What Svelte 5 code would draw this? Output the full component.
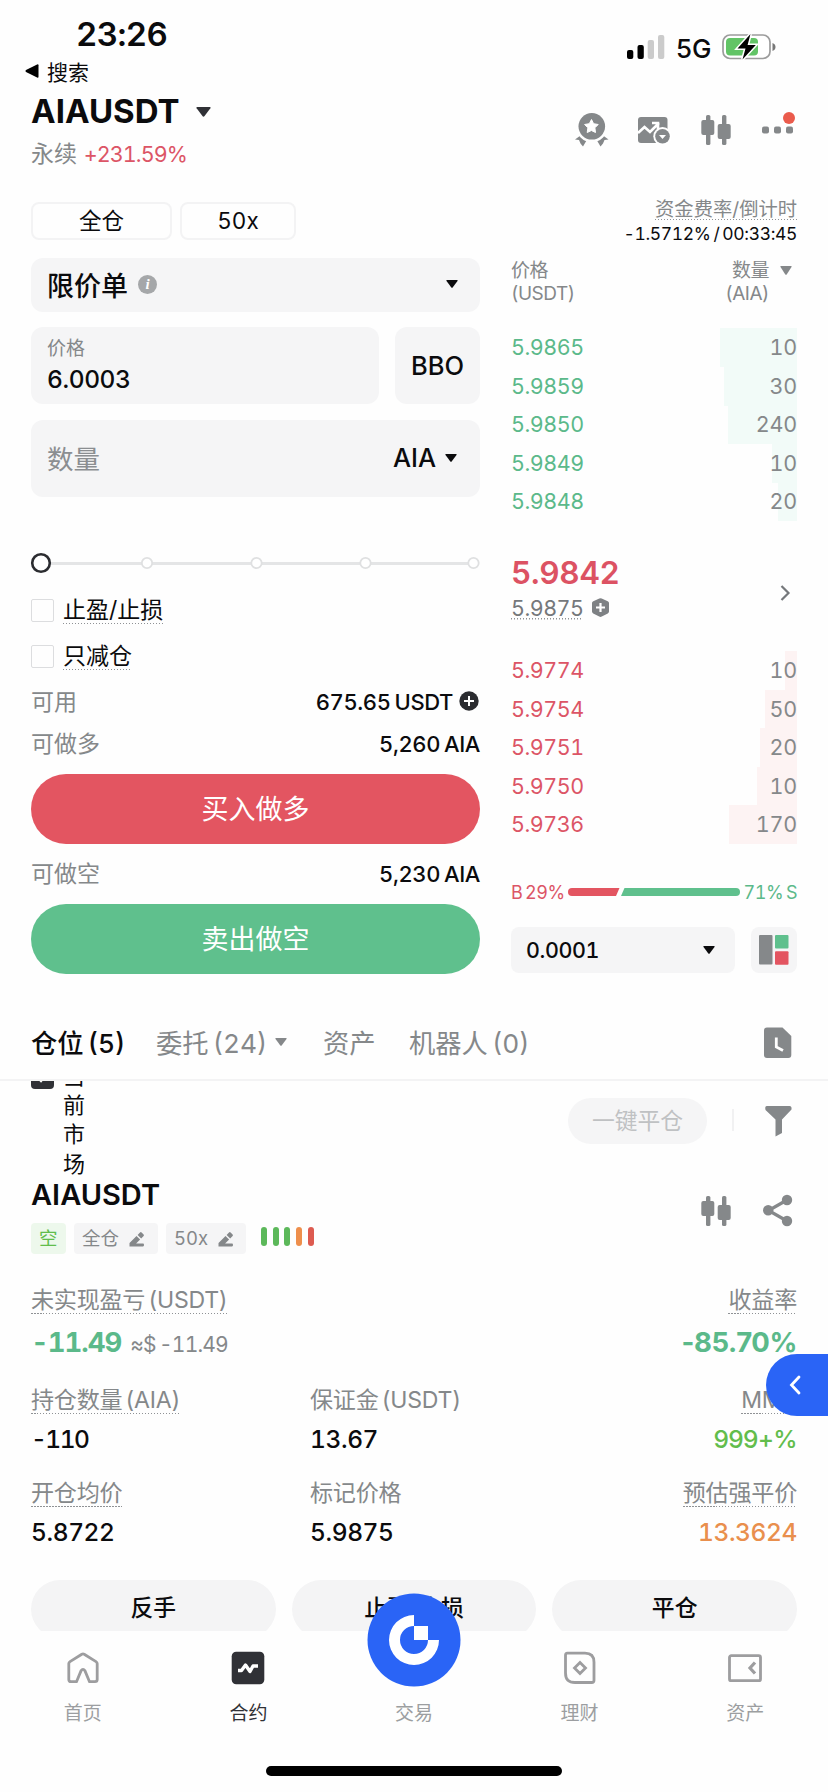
<script lang="ts">
    type Level = { price: string; amount: string; depth: number };

    const asks: Level[] = [
        {price: "5.9865", amount: "10", depth: 77},
        {price: "5.9859", amount: "30", depth: 73},
        {price: "5.9850", amount: "240", depth: 69},
        {price: "5.9849", amount: "10", depth: 25},
        {price: "5.9848", amount: "20", depth: 19}
    ];

    const bids: Level[] = [
        {price: "5.9774", amount: "10", depth: 12},
        {price: "5.9754", amount: "50", depth: 32},
        {price: "5.9751", amount: "20", depth: 37},
        {price: "5.9750", amount: "10", depth: 40},
        {price: "5.9736", amount: "170", depth: 68}
    ];

    const stops = [116, 225.5, 334.5, 442.5];
    const risk = ["low", "low", "low", "mid", "high"];
</script>

{#snippet caret(w: number, h: number)}
    <svg class="caret" width={w} height={h} viewBox="0 0 14 9" preserveAspectRatio="none">
        <path d="M1.2 0h11.6q1.4 0 .6 1.1L8 8.2q-1 1.2-2 0L.6 1.1Q-.2 0 1.2 0z" fill="currentColor"/>
    </svg>
{/snippet}

{#snippet candles()}
    <svg width="30" height="34" viewBox="0 0 30 34" fill="#85888a">
        <rect x="5" y="3" width="4.4" height="30" rx="1.6"/>
        <rect x="0.3" y="8" width="13" height="15" rx="2"/>
        <rect x="21" y="3" width="4.4" height="30" rx="1.6"/>
        <rect x="16.7" y="12" width="13" height="15" rx="2"/>
    </svg>
{/snippet}

{#snippet pencil()}
    <svg width="16" height="16" viewBox="0 0 16 16" fill="#85888a">
        <path d="M0.5 15.5V12l7-7 3.6 3.6-4 4H14q1 0 1 1.4t-1 1.5zM8.6 3.9 11 1.5q.8-.8 1.6 0l2 2q.8.8 0 1.6l-2.4 2.4z"/>
    </svg>
{/snippet}

{#snippet levels(list: Level[], side: string)}
    <div class="levels {side}">
        {#each list as row}
            <div class="level">
                <span class="price">{row.price}</span>
                <span class="depth" style="width:{row.depth}px"></span>
                <span class="amount">{row.amount}</span>
            </div>
        {/each}
    </div>
{/snippet}

<div class="phone">
    <main>
        <div class="status">
            <div>
                <div class="time">23:26</div>
                <div class="back">
                    <svg width="14" height="14" viewBox="0 0 14 14"><path d="M13.5 1.2v11.6q0 1.4-1.4.8L1 8q-1.3-1 0-2L12.1.4q1.4-.6 1.4.8z"/></svg>
                    搜索
                </div>
            </div>
            <div class="signals">
                <svg width="38" height="24" viewBox="0 0 38 24">
                    <rect x="0" y="15" width="6.3" height="9" rx="2"/>
                    <rect x="10.5" y="10" width="6.3" height="14" rx="2"/>
                    <rect x="20.7" y="5" width="6.3" height="19" rx="2" fill="#cbcbcb"/>
                    <rect x="31" y="0" width="6.3" height="24" rx="2" fill="#cbcbcb"/>
                </svg>
                <span>5G</span>
                <svg width="54" height="28" viewBox="0 0 54 28">
                    <rect x="1" y="2" width="47" height="23.5" rx="7" fill="#fff" stroke="#9c9c9c" stroke-width="1.7"/>
                    <rect x="4" y="5" width="32" height="17.5" rx="4" fill="#62c466"/>
                    <path d="M50.5 10v8q3-1.2 3-4t-3-4z" fill="#777"/>
                    <path d="M28.5 1 15.5 15.4h8L20.5 26.5 33.8 12h-8.2z" stroke="#fff" stroke-width="3" paint-order="stroke"/>
                </svg>
            </div>
        </div>

        <header>
            <div>
                <div class="pair">AIAUSDT <span class="pair-caret">{@render caret(15, 10)}</span></div>
                <div class="change">永续 <b>+231.59%</b></div>
            </div>
            <div class="tools">
                <svg width="32" height="34" viewBox="0 0 32 34" fill="#85888a">
                    <path d="M0 27.500 5.500 23.500 11.500 28.500 8 34.500 5.500 31.500 4 28zM33.500 27.500 28 23.500 22 28.500 25.500 34.500 28 31.500 29.500 28z"/>
                    <circle cx="16.800" cy="14.300" r="14.600" fill="none" stroke="#fefefe" stroke-width="2.600"/>
                    <circle cx="16.800" cy="14.300" r="13.300"/>
                    <path d="m16.500 7.500 2.100 4.200 4.600.8-3.300 3.300.6 4.700-4.100-2-4.200 2 .7-4.700-3.300-3.300 4.700-.8z" fill="#fff" stroke="#fff" stroke-linejoin="round"/>
                </svg>
                <svg width="32" height="34" viewBox="0 0 32 34" fill="#85888a">
                    <path d="M3 5h23.500q3 0 3 3v12L19 31H3q-3 0-3-3V8q0-3 3-3z"/>
                    <path d="m0 21 6.500-6 5.500 5L21 11M14 11h6v6" fill="none" stroke="#fff" stroke-width="2.600"/>
                    <circle cx="24.500" cy="24.300" r="9.200" fill="#fff"/>
                    <circle cx="24.500" cy="24.300" r="7.300"/>
                    <path d="M21 23h7l-3.500 4z" fill="#fff"/>
                </svg>
                {@render candles()}
                <svg width="35" height="34" viewBox="0 0 35 34" fill="#85888a">
                    <rect x="0" y="14.500" width="7" height="7" rx="2"/>
                    <rect x="12" y="14.500" width="7" height="7" rx="2"/>
                    <rect x="24" y="14.500" width="7" height="7" rx="2"/>
                    <circle cx="27" cy="6" r="6" fill="#ea5b4c"/>
                </svg>
            </div>
        </header>

        <div class="trade">
            <section class="form">
                <div class="modes">
                    <span class="margin">全仓</span>
                    <span class="lever">50x</span>
                </div>
                <div class="field type">
                    <span>限价单</span>
                    <i class="info">i</i>
                    <span class="end">{@render caret(12, 8)}</span>
                </div>
                <div class="prices">
                    <div class="field limit">
                        <small>价格</small>
                        <strong>6.0003</strong>
                    </div>
                    <div class="field bbo">BBO</div>
                </div>
                <div class="field qty">
                    <span class="hint">数量</span>
                    <span class="unit">AIA {@render caret(12, 8)}</span>
                </div>
                <svg class="slider" width="449" height="24" viewBox="0 0 449 24">
                    <path d="M10 12.5H442" stroke="#e4e5e6" stroke-width="3"/>
                    {#each stops as x}
                        <circle cx={x} cy="12" r="5.2" fill="#fff" stroke="#dfe0e1" stroke-width="1.8"/>
                    {/each}
                    <circle cx="10" cy="12" r="8.8" fill="#fff" stroke="#2b2c30" stroke-width="2.6"/>
                </svg>
                <div class="check"><span class="box"></span><span class="dotted">止盈/止损</span></div>
                <div class="check second"><span class="box"></span><span class="dotted">只减仓</span></div>
                <div class="info-row first">
                    <span>可用</span>
                    <b>675.65 USDT
                        <svg width="20" height="20" viewBox="0 0 20 20"><circle cx="10" cy="10" r="9.7" fill="#2b2c30"/><path d="M10 5v10M5 10h10" stroke="#fff" stroke-width="2"/></svg>
                    </b>
                </div>
                <div class="info-row"><span>可做多</span><b>5,260 AIA</b></div>
                <button class="buy">买入做多</button>
                <div class="info-row short"><span>可做空</span><b>5,230 AIA</b></div>
                <button class="sell">卖出做空</button>
            </section>

            <section class="book">
                <div class="funding"><span class="dotted">资金费率/倒计时</span></div>
                <div class="countdown">-1.5712% / 00:33:45</div>
                <div class="book-head">
                    <div>价格<br>(USDT)</div>
                    <div class="amount-head">
                        <div>数量<br>(AIA)</div>
                        {@render caret(12, 9)}
                    </div>
                </div>
                {@render levels(asks, "ask")}
                <div class="mid">
                    <div>
                        <div class="last">5.9842</div>
                        <div class="mark">
                            <span class="dotted">5.9875</span>
                            <svg width="17" height="19" viewBox="0 0 17 19"><path d="M7.3.6q1.2-.7 2.4 0l6 2.6q1.3.6 1.3 1.8v8.6q0 1.2-1.2 1.9l-6 3.1q-1.3.7-2.6 0l-6-3.1Q0 14.8 0 13.6V5q0-1.2 1.3-1.8z" fill="#7e8184"/><path d="M8.5 5v9M4 9.500h9" stroke="#fff" stroke-width="2.2"/></svg>
                        </div>
                    </div>
                    <svg class="more" width="10" height="16" viewBox="0 0 10 16"><path d="m1.5 1 7 7-7 7" fill="none" stroke="#75787b" stroke-width="2.2"/></svg>
                </div>
                {@render levels(bids, "bid")}
                <div class="ratio">
                    <span class="b">B 29%</span>
                    <svg width="172" height="8" viewBox="0 0 172 8">
                        <path d="M4 0h47.5L48 8H4a4 4 0 0 1 0-8z" fill="#e35561"/>
                        <path d="M56.5 0H168a4 4 0 0 1 0 8H53z" fill="#5fc08d"/>
                    </svg>
                    <span class="s">71% S</span>
                </div>
                <div class="step">
                    <div class="field tick">0.0001 {@render caret(12, 8)}</div>
                    <div class="field view">
                        <svg width="30" height="30" viewBox="0 0 30 30">
                            <rect width="13.5" height="29.5" rx="1" fill="#85888a"/>
                            <rect x="16" width="13.5" height="13.5" rx="1" fill="#5fc08d"/>
                            <rect x="16" y="16.2" width="13.5" height="13.5" rx="1" fill="#e35561"/>
                        </svg>
                    </div>
                </div>
            </section>
        </div>

        <nav class="tabs">
            <span class="tab active">仓位 (5)</span>
            <span class="tab orders">委托 (24) {@render caret(12, 8)}</span>
            <span class="tab assets">资产</span>
            <span class="tab bots">机器人 (0)</span>
            <svg width="28" height="32" viewBox="0 0 28 32"><path d="M3 .5h15.500L27.300 9v19q0 3-3 3H3q-3 0-3-3v-24.500q0-3 3-3z" fill="#85888a"/><path d="M12.300 10.500v9.500l6.700 3.500" fill="none" stroke="#fff" stroke-width="2.800"/></svg>
        </nav>

        <div class="filters">
            <span class="box on"><svg width="23" height="23" viewBox="0 0 23 23"><path d="m5 9.500 5 5 8-9" fill="none" stroke="#fff" stroke-width="3"/></svg></span>
            <span class="market">当前市场</span>
            <span class="close-all">一键平仓</span>
            <span class="sep"></span>
            <svg width="27" height="31" viewBox="0 0 27 31"><path d="M2 0h22.500Q27 0 26.500 3.500L17 13.500V27l-6.500 3.500v-17L.5 4Q-.5 0 2 0z" fill="#85888a"/></svg>
        </div>

        <section class="position">
            <div class="head">
                <div>
                    <h2>AIAUSDT</h2>
                    <div class="tags">
                        <span class="tag side">空</span>
                        <span class="tag mode">全仓 {@render pencil()}</span>
                        <span class="tag times">50x {@render pencil()}</span>
                        <span class="risk">
                            {#each risk as level}<i class={level}></i>{/each}
                        </span>
                    </div>
                </div>
                <div class="actions">
                    {@render candles()}
                    <svg width="30" height="34" viewBox="0 0 30 34"><path d="M24 7 5.500 17.500 24 28" fill="none" stroke="#85888a" stroke-width="3.200"/><circle cx="24" cy="7" r="5.200" fill="#85888a"/><circle cx="5.200" cy="17.300" r="5.200" fill="#85888a"/><circle cx="24" cy="28" r="5.200" fill="#85888a"/></svg>
                </div>
            </div>

            <div class="pnl">
                <div>
                    <span class="label dotted">未实现盈亏 (USDT)</span>
                    <div class="big">-11.49 <small>≈$ -11.49</small></div>
                </div>
                <div class="right">
                    <span class="label dotted">收益率</span>
                    <div class="big rate">-85.70%</div>
                </div>
            </div>

            <div class="stats">
                <div><span class="label dotted">持仓数量 (AIA)</span><p class="size">-110</p></div>
                <div><span class="label">保证金 (USDT)</span><p>13.67</p></div>
                <div class="right"><span class="label dotted">MMR</span><p class="safe">999+%</p></div>
                <div><span class="label dotted">开仓均价</span><p>5.8722</p></div>
                <div><span class="label">标记价格</span><p>5.9875</p></div>
                <div class="right"><span class="label dotted">预估强平价</span><p class="liq">13.3624</p></div>
            </div>

            <div class="ops">
                <button>反手</button>
                <button>止盈/止损</button>
                <button>平仓</button>
            </div>
        </section>
    </main>

    <footer>
        <div class="bar">
            <div class="item">
                <svg width="34" height="34" viewBox="0 0 34 34" fill="none" stroke="#9d9d9f" stroke-width="2.8" stroke-linejoin="round"><path d="M15.800 3.300q1.200-.7 2.400 0L30 10.600q1.200.8 1.200 2V28.500q0 2.200-2.200 2.200h-5.500l-4.500-10.800q-2-3-4 0L10.500 30.700H5q-2.200 0-2.200-2.200V12.600q0-1.200 1.200-2z"/></svg>
                首页
            </div>
            <div class="item active">
                <svg width="34" height="34" viewBox="0 0 34 34"><rect x=".7" y=".7" width="32.600" height="32.600" rx="4.500" fill="#303136"/><path d="M7 19.500h3.500l4-5.500 4.500 6.500 3-5.500H27" fill="none" stroke="#fff" stroke-width="3.400" stroke-linejoin="round"/></svg>
                合约
            </div>
            <div class="item trade-item">
                <svg width="94" height="94" viewBox="0 0 94 94"><circle cx="47" cy="47" r="46.500" fill="#2a64f6"/><path d="M47 22v11a14 14 0 1 0 14 14h11A25 25 0 1 1 47 22z" fill="#fff"/><rect x="47" y="33" width="14" height="14" fill="#fff"/></svg>
                交易
            </div>
            <div class="item">
                <svg width="34" height="34" viewBox="0 0 34 34" fill="none" stroke="#9d9d9f" stroke-width="2.800"><path d="M4.300 2.200H22q9 0 9 9v18q0 2.300-2.300 2.300H12q-9.500 0-9.500-9.500V4.200q0-2 1.800-2z"/><path d="m17 11.500 5.500 5.500-5.500 5.500-5.500-5.500z"/></svg>
                理财
            </div>
            <div class="item">
                <svg width="34" height="34" viewBox="0 0 34 34" fill="none" stroke="#9d9d9f" stroke-width="2.800"><rect x="1.500" y="4.700" width="31" height="25" rx="1.800"/><path d="m27 11.500-5 5.500 5 5.500" stroke-width="3.200"/></svg>
                资产
            </div>
        </div>
        <div class="home"></div>
    </footer>

    <button class="drawer" aria-label="open">
        <svg width="12" height="20" viewBox="0 0 12 20"><path d="M10 2 2.500 10l7.500 8" fill="none" stroke="#fff" stroke-width="2.800" stroke-linecap="round"/></svg>
    </button>
</div>

<style>
    :global(body) {
        background: #fff;
    }

    .phone {
        position: relative;
        width: 828px;
        height: 1792px;
        overflow: hidden;
        background: #fefefe;
        color: #0b0b0d;
        font-family: Inter, "Noto Sans CJK SC", sans-serif;
        font-feature-settings: "tnum";
        white-space: nowrap;
        word-spacing: -1.5px;
    }

    main {
        height: 1631px;
        overflow: hidden;
    }

    svg {
        display: block;
        flex: none;
        overflow: visible;
    }

    button {
        border: 0;
        padding: 0;
        font-family: inherit;
    }

    b {
        font-weight: 500;
    }

    .dotted {
        padding-bottom: 2px;
        background: repeating-linear-gradient(90deg, #8f9295 0 1.5px, transparent 1.5px 3px) left bottom / 100% 1.5px no-repeat;
    }

    .status {
        display: flex;
        justify-content: space-between;
        height: 92px;
    }

    .time {
        margin: 16px 0 0 76px;
        font-size: 33px;
        font-weight: 600;
        line-height: 36px;
        letter-spacing: -0.6px;
    }

    .back {
        display: flex;
        align-items: center;
        gap: 8px;
        margin-left: 25px;
        height: 38px;
        font-size: 21px;
    }

    .signals {
        display: flex;
        align-items: center;
        height: 28px;
        padding: 33px 52px 0 0;
        font-size: 26px;
        font-weight: 500;
    }

    .signals span {
        margin: 3px 11px 0;
        letter-spacing: -0.5px;
    }

    header {
        display: flex;
        justify-content: space-between;
        height: 110px;
        padding: 0 31px;
    }

    .pair {
        display: flex;
        align-items: center;
        gap: 17px;
        font-size: 33px;
        font-weight: 700;
        line-height: 39px;
    }

    .pair-caret {
        color: #303136;
    }

    .change {
        font-size: 23px;
        line-height: 46px;
        color: #85888a;
    }

    .change b {
        margin-left: 2px;
        font-size: 21.5px;
        font-weight: 400;
        letter-spacing: -0.9px;
        color: #dc5566;
    }

    .tools {
        display: flex;
        gap: 31px;
        padding-top: 20px;
    }

    .trade {
        display: grid;
        grid-template-columns: 449px 286px;
        gap: 31px;
        padding: 0 31px;
        height: 772px;
    }

    .modes {
        display: flex;
        gap: 8px;
        font-size: 22.5px;
        line-height: 34px;
        text-align: center;
    }

    .modes span {
        border: 2px solid #f3f3f4;
        border-radius: 8px;
    }

    .margin {
        width: 137px;
    }

    .lever {
        width: 112px;
    }

    .field {
        display: flex;
        align-items: center;
        box-sizing: border-box;
        border-radius: 12px;
        background: #f5f5f6;
    }

    .type {
        height: 54px;
        margin-top: 18px;
        padding: 0 22px 2px 16px;
        font-size: 27px;
        font-weight: 500;
    }

    .info {
        width: 19px;
        height: 19px;
        margin-left: 10px;
        border-radius: 50%;
        background: #a5a7a9;
        color: #fff;
        font: italic bold 15px/19px "Liberation Serif", serif;
        text-align: center;
    }

    .end {
        margin-left: auto;
    }

    .prices {
        display: flex;
        gap: 16px;
        margin-top: 15px;
        height: 77px;
    }

    .limit {
        flex: 1;
        flex-direction: column;
        align-items: flex-start;
        padding: 7px 16px 0;
    }

    .limit small {
        font-size: 19px;
        line-height: 30px;
        color: #85888a;
    }

    .limit strong {
        font-size: 24.5px;
        font-weight: 500;
        line-height: 31px;
        letter-spacing: -0.4px;
    }

    .bbo {
        width: 85px;
        justify-content: center;
        font-size: 25.5px;
        font-weight: 500;
    }

    .qty {
        justify-content: space-between;
        height: 77px;
        margin-top: 16px;
        padding: 0 23px 2px 16px;
        font-size: 26.5px;
    }

    .hint {
        color: #8b8e91;
    }

    .unit {
        display: flex;
        align-items: center;
        gap: 9px;
        font-size: 25.5px;
        font-weight: 500;
    }

    .slider {
        margin-top: 54px;
    }

    .check {
        display: flex;
        align-items: center;
        gap: 9px;
        height: 34px;
        margin-top: 19px;
        font-size: 23px;
        line-height: 24px;
    }

    .check.second {
        margin-top: 12px;
    }

    .box {
        box-sizing: border-box;
        width: 23px;
        height: 23px;
        border: 1.5px solid #dcdddf;
        border-radius: 2px;
    }

    .check .box {
        margin-top: -2px;
    }

    .info-row {
        display: flex;
        justify-content: space-between;
        margin-top: 2px;
        font-size: 23px;
        line-height: 40px;
        color: #85888a;
    }

    .info-row.first {
        margin-top: 8px;
    }

    .info-row.short {
        margin-top: 10px;
    }

    .info-row b {
        display: flex;
        align-items: center;
        gap: 6px;
        font-size: 22px;
        letter-spacing: -0.4px;
        color: #0b0b0d;
    }

    .info-row svg {
        margin: -2px 1px 0 0;
    }

    .buy,
    .sell {
        display: block;
        width: 449px;
        height: 70px;
        margin-top: 10px;
        padding-bottom: 3px;
        border-radius: 35px;
        background: #e35561;
        color: #fff;
        font-size: 27px;
    }

    .sell {
        background: #5fc08d;
    }

    .funding {
        display: flex;
        justify-content: flex-end;
        margin-top: -3px;
        font-size: 19.3px;
        line-height: 20px;
        color: #85888a;
    }

    .funding .dotted {
        padding-bottom: 1px;
    }

    .countdown {
        margin-top: 4px;
        font-size: 17.5px;
        line-height: 20px;
        letter-spacing: -0.35px;
        text-align: right;
    }

    .book-head {
        display: flex;
        justify-content: space-between;
        margin-top: 15px;
        font-size: 19px;
        line-height: 23px;
        letter-spacing: -0.5px;
        color: #85888a;
    }

    .amount-head {
        display: flex;
        gap: 11px;
        padding-right: 5px;
        text-align: right;
    }

    .amount-head :global(svg) {
        margin-top: 7px;
    }

    .levels {
        margin-top: 23px;
    }

    .level {
        display: grid;
        grid-template-columns: 1fr 1fr;
        height: 38.6px;
        font-size: 21.5px;
        line-height: 39px;
        letter-spacing: -0.45px;
    }

    .level > * {
        grid-row: 1;
    }

    .price {
        grid-column: 1;
    }

    .depth {
        grid-column: 2;
        justify-self: end;
    }

    .amount {
        grid-column: 2;
        text-align: right;
        letter-spacing: -0.2px;
        color: #85888a;
    }

    .ask .price {
        color: #5bb98a;
    }

    .ask .depth {
        background: #f2fbf8;
    }

    .bid {
        margin-top: 0;
    }

    .bid .price {
        color: #dc5566;
    }

    .bid .depth {
        background: #fdf3f3;
    }

    .mid {
        display: flex;
        justify-content: space-between;
        height: 97px;
        padding-top: 33px;
    }

    .last {
        font-size: 31.5px;
        font-weight: 600;
        line-height: 38px;
        letter-spacing: -0.3px;
        color: #dc5263;
    }

    .mark {
        display: flex;
        gap: 9px;
        margin-top: 6px;
        font-size: 21.5px;
        line-height: 20px;
        letter-spacing: -0.5px;
        color: #75787b;
    }

    .more {
        margin: 31px 7px 0 0;
    }

    .ratio {
        display: flex;
        align-items: center;
        justify-content: space-between;
        margin-top: 39px;
        font-size: 18px;
        line-height: 20px;
    }

    .ratio svg {
        margin-top: -2px;
    }

    .ratio span {
        letter-spacing: -0.5px;
    }

    .b {
        color: #dc5566;
    }

    .s {
        color: #5bb98a;
    }

    .step {
        display: flex;
        justify-content: space-between;
        margin-top: 24px;
    }

    .tick {
        justify-content: space-between;
        width: 224px;
        height: 46px;
        padding: 1px 20px 0 15px;
        border-radius: 8px;
        font-size: 21.5px;
        font-weight: 500;
        letter-spacing: -0.4px;
    }

    .view {
        justify-content: center;
        width: 46px;
        height: 46px;
        border-radius: 8px;
    }

    .tabs {
        display: flex;
        align-items: center;
        height: 72px;
        margin-top: 33px;
        padding: 0 36px 0 31px;
        border-bottom: 2px solid #f3f3f4;
        font-size: 26.3px;
        word-spacing: -3px;
        color: #85888a;
    }

    .tab {
        display: flex;
        align-items: center;
        gap: 8px;
        margin-top: -3px;
    }

    .tabs > svg {
        margin-left: auto;
    }

    .tabs .active {
        width: 125px;
        font-weight: 500;
        color: #0b0b0d;
    }

    .orders {
        width: 167px;
    }

    .assets {
        width: 86px;
    }

    .filters {
        display: flex;
        height: 98px;
        padding: 0 36px 0 31px;
        overflow: hidden;
    }

    .box.on {
        margin-top: -15px;
        border: 0;
        border-radius: 4px;
        background: #303136;
    }

    .market {
        width: 22px;
        margin: -19px auto 0 9px;
        font-size: 22px;
        line-height: 29.2px;
        white-space: normal;
    }

    .close-all {
        width: 139px;
        height: 46px;
        margin-top: 17px;
        border-radius: 23px;
        background: #f5f5f6;
        color: #bfc1c3;
        font-size: 22.8px;
        line-height: 45px;
        text-align: center;
    }

    .sep {
        width: 2px;
        height: 22px;
        margin: 28px 31px 0 25px;
        background: #f1f1f2;
    }

    .filters > svg {
        margin-top: 25px;
    }

    .position {
        padding: 0 31px;
    }

    .head {
        display: flex;
        justify-content: space-between;
        height: 75px;
    }

    h2 {
        margin: 0;
        font-size: 29px;
        font-weight: 600;
        line-height: 32px;
    }

    .tags {
        display: flex;
        gap: 8px;
        margin-top: 12px;
        font-size: 18.5px;
        line-height: 31px;
        color: #85888a;
    }

    .tag {
        display: flex;
        align-items: center;
        gap: 10px;
        box-sizing: border-box;
        height: 31px;
        padding-left: 8px;
        border-radius: 4px;
        background: #f5f5f6;
    }

    .tag.side {
        width: 35px;
        background: #edf8ec;
        color: #62bd4c;
    }

    .mode {
        width: 84px;
    }

    .times {
        width: 80px;
    }

    .risk {
        display: flex;
        gap: 5.7px;
        margin: 4px 0 0 7px;
    }

    .risk i {
        width: 6px;
        height: 19px;
        border-radius: 3px;
        background: #5cb85a;
    }

    .risk .mid {
        padding: 0;
        background: #ee8f4c;
    }

    .risk .high {
        background: #dd5b50;
    }

    .actions {
        display: flex;
        gap: 32px;
        padding: 14px 4px 0 0;
    }

    .pnl {
        display: flex;
        justify-content: space-between;
        margin-top: 34px;
    }

    .label {
        display: inline-block;
        padding-bottom: 2px;
        font-size: 23.1px;
        line-height: 24px;
        letter-spacing: -0.25px;
        word-spacing: -3px;
        color: #85888a;
    }

    .right {
        text-align: right;
    }

    .big {
        margin-top: 12px;
        font-size: 27.5px;
        font-weight: 700;
        line-height: 32px;
        letter-spacing: -1px;
        color: #5bb98a;
    }

    .big.rate {
        font-feature-settings: normal;
        letter-spacing: -0.4px;
    }

    .big small {
        margin-left: 4px;
        font-size: 21px;
        font-weight: 400;
        letter-spacing: -0.8px;
        color: #85888a;
    }

    .stats {
        display: grid;
        grid-template-columns: 279px 1fr auto;
        row-gap: 25px;
        margin-top: 27px;
    }

    .stats > div {
        height: 68px;
    }

    .stats p {
        margin: 9px 0 0;
        font-size: 24.5px;
        font-weight: 500;
        line-height: 32px;
        letter-spacing: -0.4px;
    }

    .stats .size {
        letter-spacing: -1.5px;
    }

    .stats .safe {
        font-feature-settings: normal;
        letter-spacing: -0.7px;
        color: #62bd4c;
    }

    .stats .liq {
        color: #e98f4d;
    }

    .ops {
        display: grid;
        grid-template-columns: repeat(3, 1fr);
        gap: 16px;
        margin-top: 31px;
    }

    .ops button {
        height: 58px;
        padding-bottom: 5px;
        border-radius: 29px;
        background: #f4f4f5;
        color: #0b0b0d;
        font-size: 22.8px;
        font-weight: 500;
    }

    footer {
        height: 161px;
        background: #fefefe;
    }

    .bar {
        display: flex;
        height: 135px;
    }

    .item {
        flex: 1;
        display: flex;
        flex-direction: column;
        align-items: center;
        gap: 17px;
        padding-top: 20px;
        font-size: 19px;
        line-height: 24px;
        color: #9c9ea1;
    }

    .item.active {
        color: #303136;
    }

    .trade-item svg {
        position: relative;
        margin: -58px 0 -2px;
    }

    .home {
        width: 296px;
        height: 10px;
        margin: 0 auto;
        border-radius: 5px;
        background: #000;
    }

    .drawer {
        position: absolute;
        top: 1354px;
        right: 0;
        width: 62px;
        height: 62px;
        padding-left: 23px;
        border-radius: 31px 0 0 31px;
        background: #2a64f6;
    }
</style>
